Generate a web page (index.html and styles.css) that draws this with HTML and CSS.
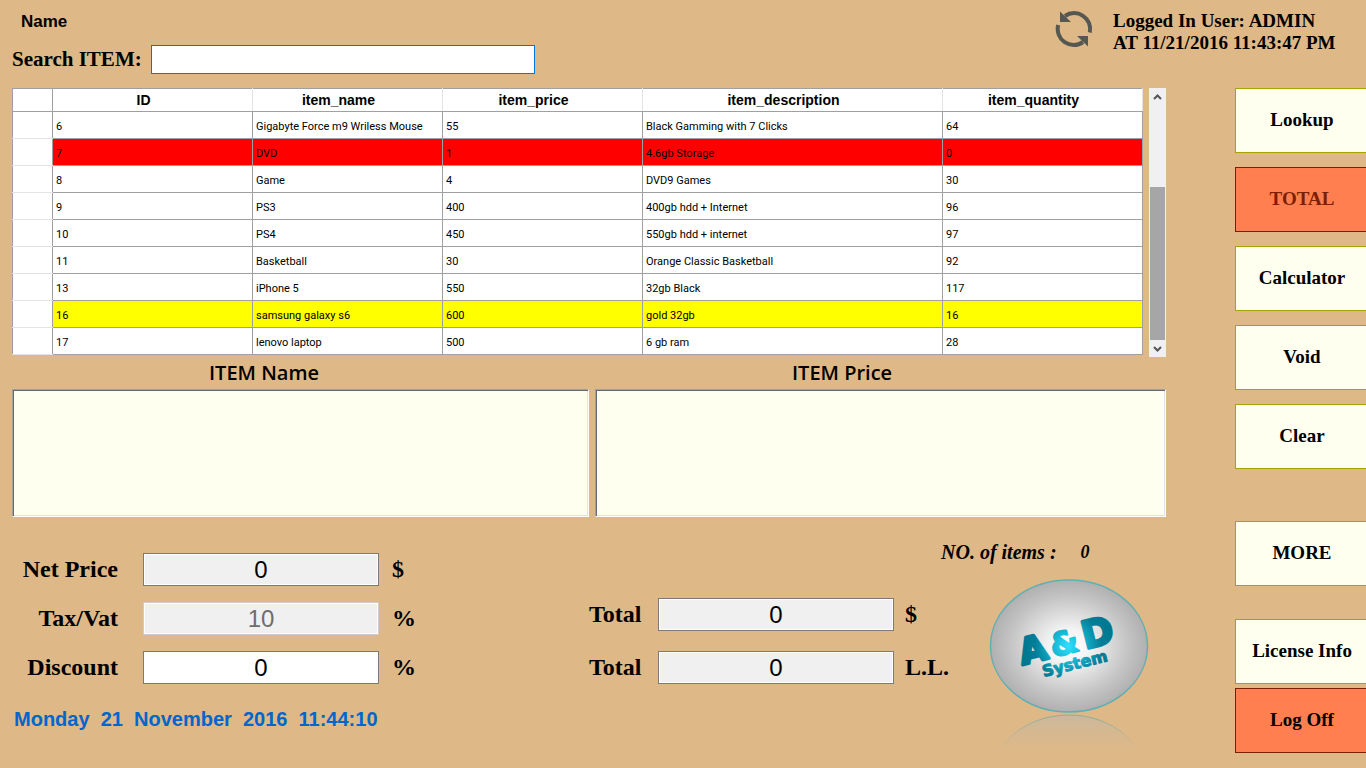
FILE: index.html
```html
<!DOCTYPE html>
<html lang="en">
<head>
<meta charset="utf-8">
<title>Point of Sale</title>
<link rel="stylesheet" href="styles.css">
</head>
<body>
<header class="top">
  <div class="search">
    <div class="search-mode">Name</div>
    <div class="search-row">
      <label class="search-label" for="search">Search ITEM:</label>
      <input class="search-input" id="search" type="text">
    </div>
  </div>
  <div class="session">
    <button class="refresh" type="button" aria-label="Refresh">
      <svg width="38" height="38" viewBox="0 0 38 38" fill="none" stroke="#555850" stroke-width="4">
        <path d="M10 6A16 16 0 0 1 34.800 22.500"/>
        <path d="M28 32A16 16 0 0 1 3.200 15"/>
        <path d="M5 1.500V12H16Z" fill="#555850" stroke="none"/>
        <path d="M33 36.500V26H22Z" fill="#555850" stroke="none"/>
      </svg>
    </button>
    <p class="session-text">Logged In User: ADMIN<br>AT 11/21/2016 11:43:47 PM</p>
  </div>
</header>
<div class="page">
  <main class="main">
    <div class="grid-wrap">
      <table class="items">
        <colgroup><col class="c-head"><col class="c-id"><col class="c-name"><col class="c-price"><col class="c-desc"><col class="c-qty"></colgroup>
        <thead>
          <tr><td></td><th>ID</th><th>item_name</th><th>item_price</th><th>item_description</th><th>item_quantity</th></tr>
        </thead>
        <tbody>
          <tr><td></td><td>6</td><td>Gigabyte Force m9 Wriless Mouse</td><td>55</td><td>Black Gamming with 7 Clicks</td><td>64</td></tr>
          <tr class="out"><td></td><td>7</td><td>DVD</td><td>1</td><td>4.6gb Storage</td><td>0</td></tr>
          <tr><td></td><td>8</td><td>Game</td><td>4</td><td>DVD9 Games</td><td>30</td></tr>
          <tr><td></td><td>9</td><td>PS3</td><td>400</td><td>400gb hdd + Internet</td><td>96</td></tr>
          <tr><td></td><td>10</td><td>PS4</td><td>450</td><td>550gb hdd + internet</td><td>97</td></tr>
          <tr><td></td><td>11</td><td>Basketball</td><td>30</td><td>Orange Classic Basketball</td><td>92</td></tr>
          <tr><td></td><td>13</td><td>iPhone 5</td><td>550</td><td>32gb Black</td><td>117</td></tr>
          <tr class="low"><td></td><td>16</td><td>samsung galaxy s6</td><td>600</td><td>gold 32gb</td><td>16</td></tr>
          <tr><td></td><td>17</td><td>lenovo laptop</td><td>500</td><td>6 gb ram</td><td>28</td></tr>
        </tbody>
      </table>
      <div class="scrollbar">
        <button class="scroll-arrow" type="button" aria-label="Scroll up"><svg width="9" height="6" viewBox="0 0 9 6"><path d="M1 5L4.500 1.500L8 5" fill="none" stroke="#555" stroke-width="2"/></svg></button>
        <div class="scroll-track"><div class="scroll-thumb"></div></div>
        <button class="scroll-arrow" type="button" aria-label="Scroll down"><svg width="9" height="6" viewBox="0 0 9 6"><path d="M1 1L4.500 4.500L8 1" fill="none" stroke="#555" stroke-width="2"/></svg></button>
      </div>
    </div>
    <div class="lists">
      <section class="list"><h2 class="list-title">ITEM Name</h2><div class="list-box"></div></section>
      <section class="list"><h2 class="list-title">ITEM Price</h2><div class="list-box"></div></section>
    </div>
    <div class="summary">
      <div class="charges">
        <div class="fields fields-charges">
          <label for="net">Net Price</label><input id="net" type="text" value="0" readonly><span>$</span>
          <label for="tax">Tax/Vat</label><input id="tax" type="text" value="10" disabled><span>%</span>
          <label for="discount">Discount</label><input id="discount" type="text" value="0"><span>%</span>
        </div>
        <p class="clock">Monday&nbsp; 21&nbsp; November&nbsp; 2016&nbsp; 11:44:10</p>
      </div>
      <div class="fields fields-totals">
        <label for="total-usd">Total</label><input id="total-usd" type="text" value="0" readonly><span>$</span>
        <label for="total-ll">Total</label><input id="total-ll" type="text" value="0" readonly><span>L.L.</span>
      </div>
      <div class="brand">
        <p class="count"><span>NO. of items :</span><span class="count-value">0</span></p>
        <svg class="logo" width="160" height="176" viewBox="0 0 160 176" role="img" aria-label="A&amp;D System">
          <defs>
            <radialGradient id="disc"><stop offset="0" stop-color="#fff"/><stop offset=".25" stop-color="#f4f4f4"/><stop offset=".75" stop-color="#c4c4c4"/><stop offset="1" stop-color="#b0b0b0"/></radialGradient>
            <radialGradient id="ink" gradientUnits="userSpaceOnUse" cx="79" cy="67" r="44"><stop offset="0" stop-color="#30e0ff"/><stop offset=".3" stop-color="#18bcd8"/><stop offset=".75" stop-color="#047e98"/><stop offset="1" stop-color="#007890"/></radialGradient>
            <linearGradient id="fade" gradientUnits="userSpaceOnUse" x1="0" y1="136" x2="0" y2="174"><stop offset="0" stop-color="#b8b8b4" stop-opacity=".5"/><stop offset="1" stop-color="#c8b8a0" stop-opacity="0"/></linearGradient>
            <linearGradient id="rim" gradientUnits="userSpaceOnUse" x1="0" y1="136" x2="0" y2="168"><stop offset="0" stop-color="#68a8a0" stop-opacity=".7"/><stop offset="1" stop-color="#68a8a0" stop-opacity="0"/></linearGradient>
          </defs>
          <ellipse cx="80" cy="67" rx="78.500" ry="66" fill="url(#disc)" stroke="#5fb0b4" stroke-width="1.500"/>
          <ellipse cx="80" cy="202" rx="78.500" ry="66" fill="url(#fade)" stroke="url(#rim)"/>
          <g class="logo-text" fill="url(#ink)" stroke="url(#ink)">
            <g transform="rotate(-14 80 67)">
              <text x="30" y="74" font-size="36" stroke-width="3">A</text>
              <text x="62" y="74" font-size="32" stroke-width="2">&amp;</text>
              <text x="95" y="74" font-size="38" stroke-width="3">D</text>
              <text x="48" y="91" font-size="16" stroke-width="1">System</text>
            </g>
          </g>
        </svg>
      </div>
    </div>
  </main>
  <nav class="actions">
    <button class="action" type="button">Lookup</button>
    <button class="action danger muted" type="button">TOTAL</button>
    <button class="action" type="button">Calculator</button>
    <button class="action" type="button">Void</button>
    <button class="action" type="button">Clear</button>
    <button class="action more" type="button">MORE</button>
    <button class="action license" type="button">License Info</button>
    <button class="action danger logoff" type="button">Log Off</button>
  </nav>
</div>
</body>
</html>
```
FILE: styles.css
```css
* { box-sizing: border-box; }
body {
  margin: 0;
  background: #deb887;
  color: #000;
  font-family: "Liberation Serif", serif;
}
p, h2 { margin: 0; }

.top { display: flex; justify-content: space-between; height: 88px; padding: 8px 24px 0 12px; }
.search-mode { padding: 4px 9px; font: bold 17px/20px "Liberation Sans", sans-serif; }
.search-row { display: flex; align-items: center; gap: 9px; margin-top: 9px; }
.search-label { font-weight: bold; font-size: 21px; line-height: 29px; }
.search-input { width: 384px; height: 29px; border: 1px solid #0078d7; background: #fff; font: 18px "Liberation Sans", sans-serif; }
.session { display: flex; align-items: flex-start; gap: 20px; }
.refresh { padding: 0; border: 0; background: none; line-height: 0; margin-top: 2px; }
.session-text { min-width: 229px; padding-top: 2px; font-weight: bold; font-size: 19px; line-height: 22px; }

.page { display: flex; gap: 69px; padding-left: 12px; }
.main { flex: 1; min-width: 0; }

.grid-wrap { display: flex; gap: 6px; height: 269px; align-items: flex-start; }
.items {
  flex: 1;
  table-layout: fixed;
  border-collapse: collapse;
  background: #fff;
  font: 11px/14px Roboto, "Liberation Sans", sans-serif;
}
.c-head { width: 40px; }
.c-id, .c-price, .c-qty { width: 200px; }
.c-name { width: 190px; }
.c-desc { width: 300px; }
.items tr { height: 27px; }
.items thead tr { height: 23px; }
.items th, .items td { padding: 3px 3px 0; border: 1px solid #a0a0a0; text-align: left; white-space: nowrap; overflow: hidden; }
.items th { padding: 0 18px 0 0; border-left-color: #e3e3e3; border-right-color: #e3e3e3; text-align: center; font: bold 14px/16px "Liberation Sans", sans-serif; }
.items td:first-child { background: #fff; }
.items tbody td:first-child { border-top-color: #e3e3e3; border-bottom-color: #e3e3e3; }
.out { background: #f00; }
.low { background: #ff0; }

.scrollbar { display: flex; flex-direction: column; width: 17px; height: 269px; background: #f0f0f0; }
.scroll-arrow { height: 17px; padding: 0; border: 0; background: none; line-height: 0; }
.scroll-track { flex: 1; display: flex; flex-direction: column; justify-content: flex-end; padding: 0 1px; }
.scroll-thumb { height: 65%; background: #a6a6a6; }

.lists { display: grid; grid-template-columns: 577fr 571fr; gap: 6px; }
.list-title { padding-left: 197px; font: 600 20px/32px "Open Sans", sans-serif; }
.list-box { height: 128px; background: #fffff0; border: 1px solid; border-color: #a0a0a0 #fff #fff #a0a0a0; box-shadow: inset 1px 1px #696969, inset -1px -1px #e3e3e3; }

.summary { display: grid; grid-template-columns: minmax(0, 577fr) minmax(0, 352fr) minmax(0, 225fr); padding-top: 36px; }
.fields { display: grid; align-items: center; font-weight: bold; font-size: 24px; line-height: 33px; }
.fields label { text-align: right; }
.fields input { width: 100%; height: 33px; padding: 0; border: 1px solid #7a7a7a; background: #fff; text-align: center; color: #000; font: 24px "Liberation Sans", sans-serif; }
.fields input:read-only { background: #f0f0f0; box-shadow: inset 0 0 0 1px #fff; }
.fields input:disabled { border-color: #ccc; color: #6d6d6d; }
.fields-charges { grid-template-columns: 106px 236px 1fr; column-gap: 25px; row-gap: 16px; }
.fields-charges span { margin-left: -12px; }
.clock { margin-top: 23px; padding-left: 2px; color: #06c; font: bold 20px/24px "Liberation Sans", sans-serif; }
.fields-totals { align-content: start; grid-template-columns: 52px 236px 1fr; column-gap: 17px; row-gap: 20px; padding-top: 45px; }
.fields-totals span { margin-left: -6px; }

.count { display: flex; gap: 24px; margin-top: -13px; font: italic bold 20px/24px "Liberation Serif", serif; }
.count-value { font-size: 18px; }
.logo { display: block; margin: 15px 0 0 48px; }
.logo-text { font-family: "DejaVu Sans", sans-serif; font-weight: bold; stroke-linejoin: round; }

.actions { display: flex; flex-direction: column; gap: 14px; width: 131px; }
.action {
  height: 65px;
  padding: 0 0 2px 2px;
  border: 1px solid #a5a500;
  border-right: 0;
  background: #fffff0;
  color: #000;
  font: bold 19px "Liberation Serif", serif;
}
.danger { border-color: #7a2000; background: #ff7f50; }
.muted { color: #7a2000; }
.more { margin-top: 38px; }
.license { margin-top: 19px; }
.logoff { margin-top: -10px; }
```
